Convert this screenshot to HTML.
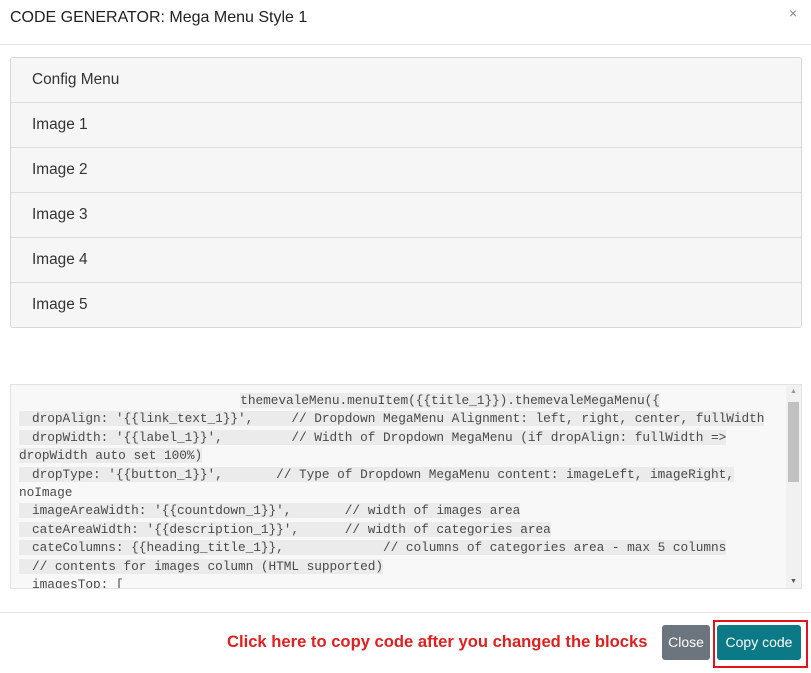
<!DOCTYPE html>
<html><head><style>
body{margin:0;width:811px;height:673px;background:#fff;font-family:"Liberation Sans",sans-serif;position:relative;overflow:hidden}
.title{position:absolute;left:10px;top:9px;font-size:16px;color:#222}
.x{position:absolute;left:789px;top:5px;font-size:14px;color:#888}
.hr{position:absolute;left:0;width:811px;height:1px;background:#e5e5e5}
.acc{position:absolute;left:10px;top:57px;width:790px;border:1px solid #d8d8d8;border-radius:3px;overflow:hidden}
.acc div{height:44px;border-bottom:1px solid #dcdcdc;background:#f6f6f6;font-size:15.4px;color:#333;line-height:44px;padding-left:21px}
.acc div:last-child{border-bottom:none}
.code{position:absolute;left:10px;top:384px;width:790px;height:203px;background:#f8f8f8;border:1px solid #e3e3e3;overflow:hidden}
.inner{position:absolute;left:8px;top:7px;width:1000px;font-family:"Liberation Mono",monospace;font-size:12.8px;letter-spacing:-0.05px;color:#4a4a4a;line-height:18.4px;white-space:pre}
.inner span{background:#ebebeb}
.inner i{display:inline-block;width:13px}
.sb{position:absolute;right:0;top:0;width:15px;height:203px;background:#f1f1f1}
.th{position:absolute;right:2px;top:17px;width:11px;height:80px;background:#c1c1c1}
.red{position:absolute;left:227px;top:632px;font-size:16.6px;font-weight:bold;color:#e02020}
.close{position:absolute;left:662px;top:625px;width:48px;height:35px;background:#6c757d;border-radius:3px;color:#fff;font-size:14px;line-height:34px;text-align:center}
.outline{position:absolute;left:713px;top:620px;width:91px;height:44px;border:2px solid #e0141e}
.copy{position:absolute;left:717px;top:625px;width:84px;height:35px;background:#0b7a86;border-radius:3px;color:#fff;font-size:14px;line-height:34px;text-align:center}
</style></head><body>
<div class="title">CODE GENERATOR: Mega Menu Style 1</div>
<div class="x">×</div>
<div class="hr" style="top:44px"></div>
<div class="acc"><div>Config Menu</div><div>Image 1</div><div>Image 2</div><div>Image 3</div><div>Image 4</div><div>Image 5</div></div>
<div class="code"><div class="inner">                             <span>themevaleMenu.menuItem({{title_1}}).themevaleMegaMenu({</span>
<span><i></i>dropAlign: '{{link_text_1}}',     // Dropdown MegaMenu Alignment: left, right, center, fullWidth</span>
<span><i></i>dropWidth: '{{label_1}}',         // Width of Dropdown MegaMenu (if dropAlign: fullWidth =&gt;</span>
<span>dropWidth auto set 100%)</span>
<span><i></i>dropType: '{{button_1}}',       // Type of Dropdown MegaMenu content: imageLeft, imageRight,</span>
noImage
<span><i></i>imageAreaWidth: '{{countdown_1}}',       // width of images area</span>
<span><i></i>cateAreaWidth: '{{description_1}}',      // width of categories area</span>
<span><i></i>cateColumns: {{heading_title_1}},             // columns of categories area - max 5 columns</span>
<span><i></i>// contents for images column (HTML supported)</span>
<i></i>imagesTop: [</div>
<div class="sb"><div class="th"></div><div style="position:absolute;left:4px;top:3px;font-size:7px;color:#999">▲</div><div style="position:absolute;left:4px;bottom:3px;font-size:7px;color:#555">▼</div></div></div>
<div class="hr" style="top:612px"></div>
<div class="red">Click here to copy code after you changed the blocks</div>
<div class="close">Close</div>
<div class="outline"></div>
<div class="copy">Copy code</div>
</body></html>
